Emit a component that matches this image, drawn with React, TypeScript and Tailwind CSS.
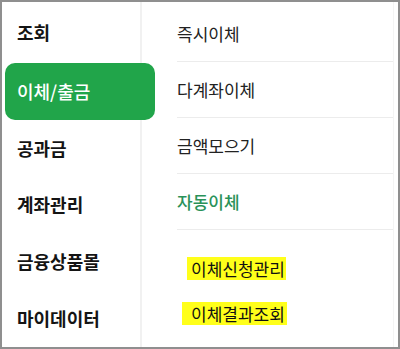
const leftMenu = ["조회", "이체/출금", "공과금", "계좌관리", "금융상품몰", "마이데이터"];
const subMenu = ["즉시이체", "다계좌이체", "금액모으기", "자동이체"];

export default function App() {
  return (
    <div
      className="flex h-[349px] w-[400px] overflow-hidden border-2 border-[#8f8f8f] bg-white"
      style={{ fontFamily: '"Noto Sans CJK KR", "Noto Sans", sans-serif' }}
    >
      <nav className="flex w-[140px] shrink-0 flex-col border-r-2 border-[#f1f1f1] pt-[2px]">
        {leftMenu.map((label) =>
          label === "이체/출금" ? (
            <div key={label} className="flex h-[59px] items-center">
              <div className="relative z-10 ml-[3px] mt-[2px] flex h-[57px] w-[150px] shrink-0 items-center rounded-[10px] bg-[#21a54a] pl-[12px] text-[18px] font-medium text-white">
                {label}
              </div>
            </div>
          ) : (
            <div
              key={label}
              className="flex h-[59px] items-center pl-[15px] text-[18px] font-semibold text-[#141414]"
            >
              {label}
            </div>
          )
        )}
      </nav>
      <section className="mr-[4px] flex flex-1 flex-col border-r border-[#f4f4f4] pl-[35px] pt-[4px]">
        {subMenu.map((label) => (
          <div
            key={label}
            className={`flex h-[56px] items-center border-b border-[#ececec] text-[17px] ${
              label === "자동이체" ? "font-medium text-[#2a9259]" : "text-[#222222]"
            }`}
          >
            {label}
          </div>
        ))}
        <div className="mt-[27px] flex flex-col items-start gap-[22px] text-[17px] text-[#111111]">
          <span className="ml-[10px] flex h-[23px] items-center bg-[#ffff1a] pl-[4px] pr-[1px]">
            이체신청관리
          </span>
          <span className="ml-[5px] flex h-[23px] items-center bg-[#ffff1a] pl-[9px] pr-[2px]">
            이체결과조회
          </span>
        </div>
      </section>
    </div>
  );
}
